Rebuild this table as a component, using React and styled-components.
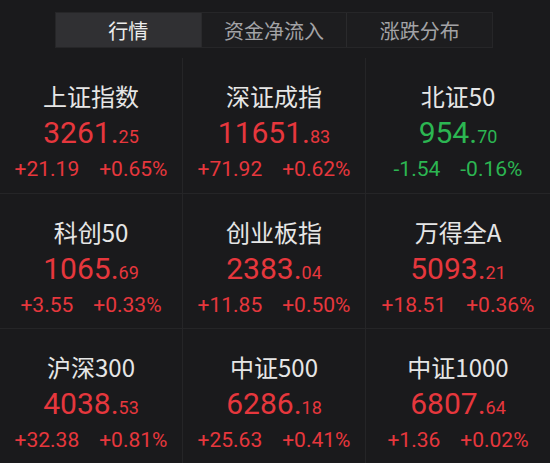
import React from "react";
import styled, { createGlobalStyle } from "styled-components";

const GlobalStyle = createGlobalStyle`
  html, body {
    margin: 0;
    padding: 0;
    background: #1a1a1c;
  }
`;

const RED = "#e6373d";
const GREEN = "#2cb652";

const tabs = ["行情", "资金净流入", "涨跌分布"];

const indices = [
  { name: "上证指数", int: "3261", dec: "25", chg: "+21.19", pct: "+0.65%", up: true },
  { name: "深证成指", int: "11651", dec: "83", chg: "+71.92", pct: "+0.62%", up: true },
  { name: "北证50", int: "954", dec: "70", chg: "-1.54", pct: "-0.16%", up: false },
  { name: "科创50", int: "1065", dec: "69", chg: "+3.55", pct: "+0.33%", up: true },
  { name: "创业板指", int: "2383", dec: "04", chg: "+11.85", pct: "+0.50%", up: true },
  { name: "万得全A", int: "5093", dec: "21", chg: "+18.51", pct: "+0.36%", up: true },
  { name: "沪深300", int: "4038", dec: "53", chg: "+32.38", pct: "+0.81%", up: true },
  { name: "中证500", int: "6286", dec: "18", chg: "+25.63", pct: "+0.41%", up: true },
  { name: "中证1000", int: "6807", dec: "64", chg: "+1.36", pct: "+0.02%", up: true },
];

function App() {
  return (
    <Page>
      <GlobalStyle />
      <TabBar>
        {tabs.map((t, i) => (
          <Tab key={t} active={i === 0}>{t}</Tab>
        ))}
      </TabBar>
      <Grid>
        {indices.map((it) => (
          <Cell key={it.name}>
            <Title>{it.name}</Title>
            <Price up={it.up}>
              {it.int}.<small>{it.dec}</small>
            </Price>
            <Changes up={it.up}>
              <span>{it.chg}</span>
              <span>{it.pct}</span>
            </Changes>
          </Cell>
        ))}
      </Grid>
    </Page>
  );
}

const Page = styled.div`
  width: 550px;
  height: 463px;
  overflow: hidden;
  background: #1a1a1c;
  font-family: "Noto Sans CJK SC", "Noto Sans", sans-serif;
`;

const TabBar = styled.div`
  display: flex;
  width: 438px;
  height: 36px;
  margin: 12px 0 0 55px;
  background: #1d1d1f;
  border: 1px solid #262628;
  box-sizing: border-box;
`;

const Tab = styled.div`
  flex: 1;
  display: flex;
  align-items: center;
  justify-content: center;
  font-size: 20px;
  color: ${(p) => (p.active ? "#ececec" : "#a3a3a6")};
  background: ${(p) => (p.active ? "#303033" : "transparent")};
  & + & {
    border-left: 1px solid #2a2a2c;
  }
`;

const Grid = styled.div`
  display: grid;
  grid-template-columns: 182px 182px 184px;
  grid-template-rows: 135px 134px 136px;
  gap: 1px;
  margin-top: 10px;
  background: #252527;
`;

const Cell = styled.div`
  background: #1a1a1c;
  display: flex;
  flex-direction: column;
  align-items: center;
  padding-top: 21px;
  box-sizing: border-box;
`;

const Title = styled.div`
  font-size: 24px;
  line-height: 34px;
  color: #e6e6e6;
`;

const Price = styled.div`
  font-family: Roboto, "Noto Sans", sans-serif;
  font-size: 30px;
  line-height: 36px;
  margin-top: 2px;
  color: ${(p) => (p.up ? RED : GREEN)};
  small {
    font-size: 18px;
  }
`;

const Changes = styled.div`
  display: flex;
  gap: 20px;
  margin-top: -2px;
  font-family: Roboto, "Noto Sans", sans-serif;
  font-size: 21px;
  line-height: 32px;
  color: ${(p) => (p.up ? RED : GREEN)};
`;

export default App;
